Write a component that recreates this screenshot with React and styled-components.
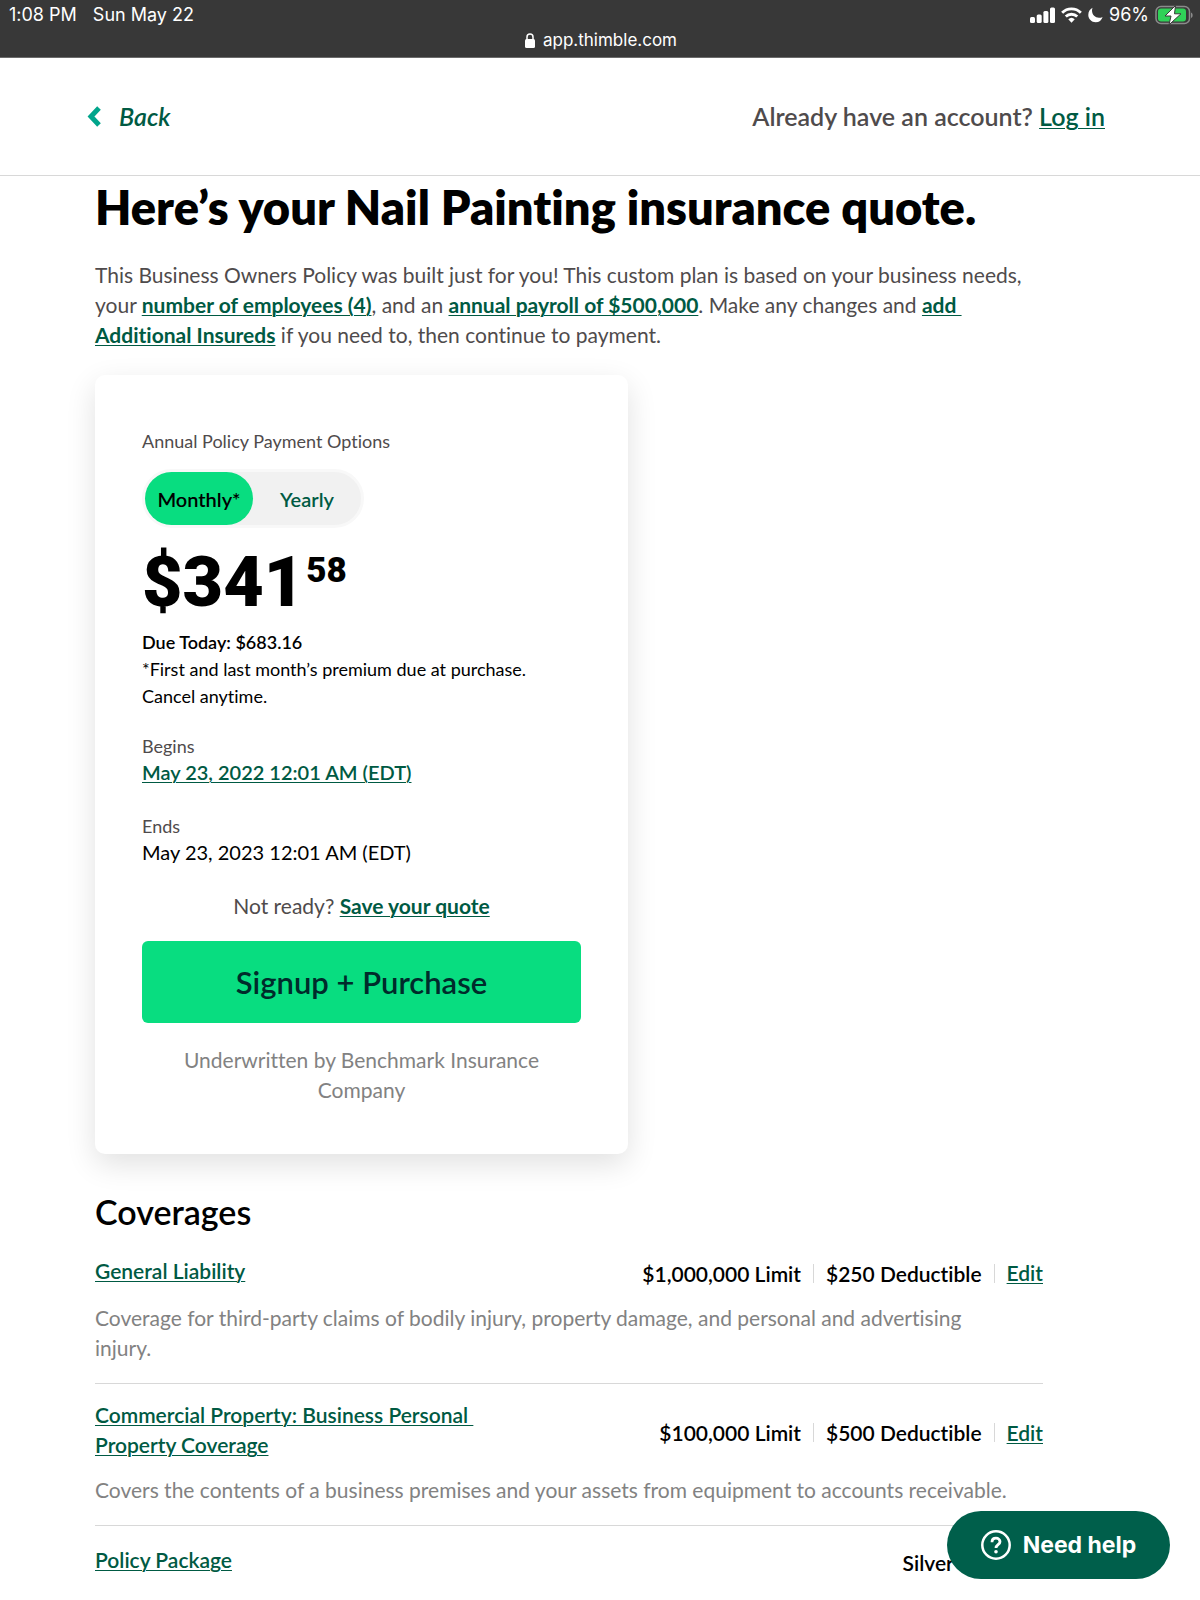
import { useState } from "react";
import styled, { createGlobalStyle } from "styled-components";

const coverages = [
  {
    name: "General Liability",
    values: ["$1,000,000 Limit", "$250 Deductible"],
    description:
      "Coverage for third-party claims of bodily injury, property damage, and personal and advertising injury.",
  },
  {
    name: (
      <>
        Commercial Property: Business Personal&nbsp;
        <wbr />
        Property Coverage
      </>
    ),
    values: ["$100,000 Limit", "$500 Deductible"],
    description:
      "Covers the contents of a business premises and your assets from equipment to accounts receivable.",
  },
  { name: "Policy Package", values: ["Silver"] },
];

const StatusBar = () => (
  <StyledStatusBar>
    <StatusRow>
      <StatusGroup $gap="16px">
        <span>1:08 PM</span>
        <span>Sun May 22</span>
      </StatusGroup>
      <StatusGroup $gap="6px">
        <svg width="25" height="16" viewBox="0 0 25 16" fill="#fff">
          <rect x="0" y="10" width="5" height="6" rx="1.500" />
          <rect x="6.700" y="7.500" width="5" height="8.500" rx="1.500" />
          <rect x="13.400" y="4" width="5" height="12" rx="1.500" />
          <rect x="20" y="0.500" width="5" height="15.500" rx="1.500" />
        </svg>
        <svg width="21" height="16" viewBox="0 0 22 16" fill="none" stroke="#fff" strokeWidth="3">
          <path d="M1.200 5.600a14 14 0 0 1 19.600 0" />
          <path d="M5 9.600a8.600 8.600 0 0 1 12 0" />
          <path d="M11 16l-3.400-3.500a5 5 0 0 1 6.800 0z" fill="#fff" stroke="none" />
        </svg>
        <svg width="15" height="16" viewBox="0 0 15 16" fill="#fff">
          <path d="M4.600.8A8.200 8.200 0 0 0 4 3.600c0 4.300 3.300 7.200 7 7.200 1.300 0 2.500-.3 3.600-.9A7.500 7.500 0 0 1 7.600 15.200C3.600 15.200.3 12 .3 8 .3 4.700 2 2 4.600.8z" />
        </svg>
        <span>96%</span>
        <svg width="38" height="20" viewBox="0 0 38 20">
          <rect x="1" y="1.500" width="33.500" height="17" rx="5" fill="none" stroke="#8b8b8b" strokeWidth="1.500" />
          <rect x="3" y="3.500" width="28" height="13" rx="3" fill="#30d158" />
          <path d="M36 7.500c2.200.8 2.200 4.700 0 5.500z" fill="#8b8b8b" />
          <path
            d="M20.500 0.500L10 11h6L14 19.800 26 8.800h-6.500z"
            fill="#fff"
            stroke="#383838"
            strokeWidth="1"
          />
        </svg>
      </StatusGroup>
    </StatusRow>
    <Address>
      <svg width="10" height="15" viewBox="0 0 10 15">
        <rect x="0" y="6" width="10" height="9" rx="1.500" fill="#fff" />
        <path d="M2 7V4a3 3 0 0 1 6 0v3" fill="none" stroke="#fff" strokeWidth="1.500" />
      </svg>
      app.thimble.com
    </Address>
  </StyledStatusBar>
);

const Coverage = ({ name, values, description }) => (
  <StyledCoverage>
    <CoverageTop>
      <CoverageName>
        <Link href="#coverage">{name}</Link>
      </CoverageName>
      <Values>
        {values.map((value) => (
          <Value key={value}>{value}</Value>
        ))}
        <Link href="#edit">Edit</Link>
      </Values>
    </CoverageTop>
    {description && <Description>{description}</Description>}
  </StyledCoverage>
);

const App = () => {
  const [plan, setPlan] = useState("monthly");

  return (
    <>
      <GlobalStyle />
      <StatusBar />
      <Header>
        <BackButton type="button">
          <svg width="14" height="22" viewBox="0 0 14 22" fill="none" stroke="#00a58b" strokeWidth="5">
            <path d="M12 3L4 11.500l8 8.500" />
          </svg>
          Back
        </BackButton>
        <Account>
          Already have an account? <Link href="#login">Log in</Link>
        </Account>
      </Header>
      <Main>
        <Title>Here’s your Nail Painting insurance quote.</Title>
        <Intro>
          This Business Owners Policy was built just for you! This custom plan is based on your
          business needs, your <StrongLink href="#employees">number of employees (4)</StrongLink>,
          and an <StrongLink href="#payroll">annual payroll of $500,000</StrongLink>. Make any
          changes and{" "}
          <StrongLink href="#insureds">
            add&nbsp;
            <wbr />
            Additional Insureds
          </StrongLink>{" "}
          if you need to, then continue to payment.
        </Intro>

        <Card>
          <Label>Annual Policy Payment Options</Label>
          <Toggle>
            <ToggleButton
              type="button"
              $active={plan === "monthly"}
              onClick={() => setPlan("monthly")}
            >
              Monthly*
            </ToggleButton>
            <ToggleButton
              type="button"
              $active={plan === "yearly"}
              onClick={() => setPlan("yearly")}
            >
              Yearly
            </ToggleButton>
          </Toggle>
          <Price>
            $341<Cents>58</Cents>
          </Price>
          <Due>
            <strong>Due Today: $683.16</strong>
            <br />
            *First and last month’s premium due at purchase. Cancel anytime.
          </Due>
          <DateBlock>
            <Label>Begins</Label>
            <Link href="#begins">May 23, 2022 12:01 AM (EDT)</Link>
          </DateBlock>
          <DateBlock>
            <Label>Ends</Label>
            <span>May 23, 2023 12:01 AM (EDT)</span>
          </DateBlock>
          <Save>
            Not ready? <StrongLink href="#save">Save your quote</StrongLink>
          </Save>
          <Purchase type="button">Signup + Purchase</Purchase>
          <Underwriter>Underwritten by Benchmark Insurance Company</Underwriter>
        </Card>

        <Subtitle>Coverages</Subtitle>
        {coverages.map((coverage, i) => (
          <Coverage key={i} {...coverage} />
        ))}
      </Main>
      <HelpButton type="button">
        <svg width="30" height="30" viewBox="0 0 30 30" fill="none" stroke="#fff" strokeWidth="2.500">
          <circle cx="15" cy="15" r="13.700" />
          <path d="M11 12.200c0-2.500 1.700-4 4-4s4 1.500 4 3.500c0 3-4 3-4 6.300" strokeWidth="2.800" />
          <circle cx="15" cy="21.800" r="1.800" fill="#fff" stroke="none" />
        </svg>
        Need help
      </HelpButton>
    </>
  );
};

const GlobalStyle = createGlobalStyle`
  * {
    box-sizing: border-box;
  }

  body {
    margin: 0;
    background: #fff;
    color: #000;
    font-family: Lato, "Open Sans", sans-serif;
    font-size: 21px;
    line-height: 30px;
    font-variant-ligatures: none;
  }

  button {
    border: none;
    font-family: inherit;
    cursor: pointer;
  }

  svg {
    flex: none;
  }
`;

const StyledStatusBar = styled.div`
  background: #383838;
  border-bottom: 1px solid #6b6b6b;
  color: #fff;
  padding: 3px 7px 5px 9px;
  font-family: Inter, "Liberation Sans", sans-serif;
  font-size: 18px;
  line-height: 24px;
`;

const StatusRow = styled.div`
  display: flex;
  justify-content: space-between;
`;

const StatusGroup = styled.div`
  display: flex;
  align-items: center;
  gap: ${(props) => props.$gap};
`;

const Address = styled.div`
  display: flex;
  justify-content: center;
  align-items: center;
  gap: 8px;
  padding-top: 1px;
  font-size: 17px;
`;

const Header = styled.header`
  display: flex;
  justify-content: space-between;
  align-items: center;
  min-height: 118px;
  padding: 0 95px 2px 87px;
  border-bottom: 1px solid #d8d8d8;
  font-size: 25px;
`;

const Link = styled.a`
  color: #005a43;
  font-weight: 600;
  text-decoration: underline;
  text-decoration-thickness: 1px;
  text-underline-offset: 2px;
`;

const StrongLink = styled(Link)`
  font-weight: 700;
`;

const BackButton = styled.button`
  display: flex;
  align-items: center;
  gap: 18px;
  padding: 0;
  background: none;
  color: #005a43;
  font-size: 25px;
  font-style: italic;
  font-weight: 600;
`;

const Account = styled.div`
  color: #4f4b4c;
  font-weight: 600;
`;

const Main = styled.main`
  max-width: 1043px;
  padding-left: 95px;
`;

const Title = styled.h1`
  margin: 0;
  padding-top: 5px;
  font-size: 47px;
  line-height: 52px;
  font-weight: 800;
`;

const Intro = styled.p`
  margin: 27px 0 25px;
  color: #4f4b4c;
`;

const Card = styled.section`
  max-width: 533px;
  padding: 53px 47px 49px;
  border-radius: 10px;
  box-shadow: 0 10px 30px rgba(0, 0, 0, 0.12);
`;

const Label = styled.div`
  color: #4f4b4c;
  font-size: 18px;
  line-height: 26px;
`;

const Toggle = styled.div`
  display: inline-flex;
  margin-top: 15px;
  border: 3px solid #f8f8f8;
  border-radius: 30px;
  background: #f1f1f1;
`;

const ToggleButton = styled.button`
  width: 108px;
  height: 53px;
  padding: 0;
  border-radius: 27px;
  background: ${(props) => (props.$active ? "#08dd80" : "transparent")};
  color: ${(props) => (props.$active ? "#000" : "#005a43")};
  font-size: 20px;
  font-weight: 600;
`;

const Price = styled.div`
  display: flex;
  margin: 14px 0 7px;
  font-family: Roboto, Lato, sans-serif;
  font-size: 70px;
  line-height: 80px;
  font-weight: 900;
`;

const Cents = styled.span`
  margin-left: 2px;
  font-size: 35px;
  line-height: 58px;
`;

const Due = styled.p`
  margin: 0 0 23px;
  font-size: 18px;
  line-height: 27px;

  strong {
    font-weight: 600;
  }
`;

const DateBlock = styled.div`
  margin-bottom: 28px;
  font-size: 20px;
  line-height: 26px;
`;

const Save = styled.div`
  color: #4f4b4c;
  line-height: 26px;
  text-align: center;
`;

const Purchase = styled.button`
  width: 100%;
  height: 82px;
  margin: 22px 0;
  border-radius: 6px;
  background: #08dd80;
  color: #002b2b;
  font-size: 31px;
  font-weight: 600;
`;

const Underwriter = styled.p`
  margin: 0;
  color: #828282;
  text-align: center;
`;

const Subtitle = styled.h2`
  margin: 39px 0 22px;
  font-size: 34px;
  line-height: 38px;
  font-weight: 600;
`;

const StyledCoverage = styled.article`
  margin-bottom: 20px;

  & + & {
    padding-top: 16px;
    border-top: 1px solid #d8d8d8;
  }

  &:last-child {
    margin-bottom: 0;
  }
`;

const CoverageTop = styled.div`
  display: flex;
  justify-content: space-between;
  align-items: center;
`;

const CoverageName = styled.div`
  max-width: 420px;
`;

const Values = styled.div`
  display: flex;
  align-items: center;
  padding-top: 5px;
  font-weight: 600;
`;

const Value = styled.span`
  min-width: 92px;
  margin-right: 12px;
  padding-right: 12px;
  border-right: 1px solid #d8d8d8;
  line-height: 19px;
`;

const Description = styled.p`
  max-width: 920px;
  margin: 15px 0 0;
  color: #828282;
`;

const HelpButton = styled.button`
  position: fixed;
  right: 30px;
  bottom: 21px;
  display: flex;
  align-items: center;
  justify-content: center;
  gap: 12px;
  width: 223px;
  height: 68px;
  border-radius: 34px;
  background: #005f4b;
  color: #fff;
  font-family: Inter, sans-serif;
  font-size: 23px;
  font-weight: 700;
`;

export default App;
